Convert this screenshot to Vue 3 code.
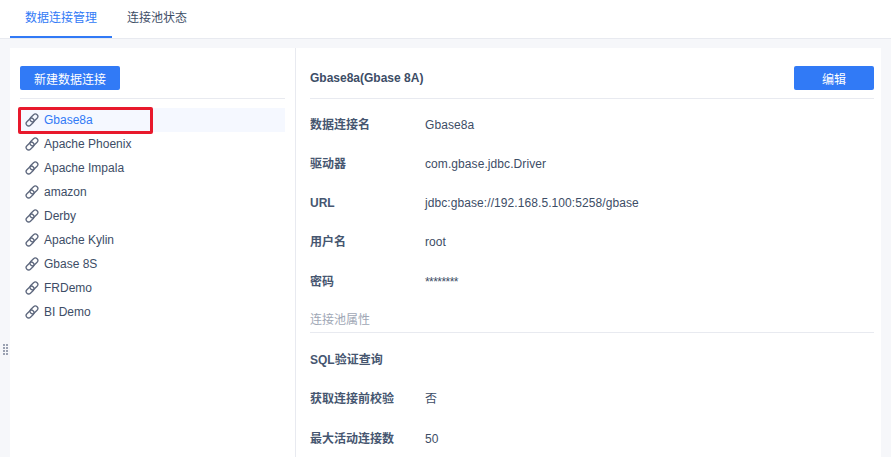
<script setup>
const items = ['Gbase8a','Apache Phoenix','Apache Impala','amazon','Derby','Apache Kylin','Gbase 8S','FRDemo','BI Demo']
const rows1 = [
  { k: '数据连接名', v: 'Gbase8a' },
  { k: '驱动器', v: 'com.gbase.jdbc.Driver' },
  { k: 'URL', v: 'jdbc:gbase://192.168.5.100:5258/gbase' },
  { k: '用户名', v: 'root' },
  { k: '密码', v: '********', mask: true },
]
const rows2 = [
  { k: 'SQL验证查询', v: '' },
  { k: '获取连接前校验', v: '否' },
  { k: '最大活动连接数', v: '50' },
]
</script>

<template>
  <div class="page">
    <div class="tabs">
      <div class="tab active">数据连接管理</div>
      <div class="tab">连接池状态</div>
    </div>
    <div class="body">
      <div class="grip"><i v-for="n in 8" :key="n"></i></div>
      <div class="panel">
        <div class="left">
          <div class="left-head"><button class="btn new">新建数据连接</button></div>
          <ul class="list">
            <li v-for="(it, i) in items" :key="it" :class="{ sel: i === 0 }">
              <svg class="ic" viewBox="0 0 14 14" width="14" height="14" fill="none" stroke="#5d677d" stroke-width="1.3">
                <rect x="4.4" y="2.4" width="9" height="5" rx="2.5" transform="rotate(-45 8.9 4.9)" />
                <rect x="0.6" y="6.6" width="9" height="5" rx="2.5" transform="rotate(-45 5.1 9.1)" />
              </svg>
              <span>{{ it }}</span>
            </li>
          </ul>
          <div class="mark"></div>
        </div>
        <div class="right">
          <div class="right-head">
            <span class="title">Gbase8a(Gbase 8A)</span>
            <button class="btn edit">编辑</button>
          </div>
          <div class="rows first">
            <div class="row" v-for="r in rows1" :key="r.k">
              <span class="k">{{ r.k }}</span><span class="v" :class="{ mask: r.mask }">{{ r.v }}</span>
            </div>
          </div>
          <div class="section">连接池属性</div>
          <div class="rows second">
            <div class="row" v-for="r in rows2" :key="r.k">
              <span class="k">{{ r.k }}</span><span class="v">{{ r.v }}</span>
            </div>
          </div>
        </div>
      </div>
    </div>
  </div>
</template>

<style>
html, body { margin: 0; background: #f6f7fa; overflow: hidden; }
</style>

<style scoped>
.page {
  width: 891px; height: 457px; overflow: hidden; background: #f6f7fa;
  font-family: "Liberation Sans", "Noto Sans CJK SC", sans-serif;
  font-size: 12px; color: #3d4d66;
}
.tabs { height: 38px; background: #fff; border-bottom: 1px solid #e8eaf0; display: flex; padding-left: 10px; }
.tab { width: 102px; height: 38px; line-height: 37px; text-align: center; box-sizing: border-box; }
.tab + .tab { width: 90px; }
.tab.active { color: #317af6; border-bottom: 2px solid #317af6; }
.body { position: relative; height: 418px; padding: 9px 10px 0; box-sizing: border-box; }
.grip { position: absolute; left: 3px; top: 305px; width: 6px; display: grid; grid-template-columns: 2px 2px; gap: 1px; }
.grip i { width: 2px; height: 2px; background: #9aa1b1; }
.panel { background: #fff; height: 409px; display: flex; }
.left { width: 286px; height: 100%; position: relative; padding: 18px 10px 0; box-sizing: border-box; border-right: 1px solid #e8eaf0; flex: none; }
.left-head { height: 32px; border-bottom: 1px solid #e8eaf0; }
.btn { border: 0; background: #317af6; color: #fff; font: inherit; height: 24px; border-radius: 2px; padding: 0; display: block; }
.new { width: 100px; }
.list { list-style: none; margin: 9px 0 0; padding: 0; }
.list li { height: 24px; display: flex; align-items: center; padding-left: 5px; color: #3d4d66; }
.list li.sel { background: #f5f8ff; color: #317af6; }
.ic { margin-right: 5px; flex: none; }
.mark { position: absolute; left: 8px; top: 59px; width: 135px; height: 27px; box-sizing: border-box; border: 3px solid #e8192c; border-radius: 2px; }
.right { flex: 1; padding: 18px 7px 0 14px; min-width: 0; }
.right-head { height: 32px; border-bottom: 1px solid #e8eaf0; display: flex; justify-content: space-between; align-items: flex-start; }
.title { font-weight: 700; line-height: 24px; }
.edit { width: 80px; }
.rows.first { margin-top: 6px; }
.row { height: 39.25px; display: flex; align-items: center; }
.k { width: 115px; font-weight: 700; line-height: 16px; color: #465670; flex: none; }
.v { line-height: 16px; color: #3d4d66; letter-spacing: .08px; }
.v.mask { letter-spacing: -.55px; }
.section { padding-top: 11.8px; height: 18.95px; line-height: 14px; color: #a0a7b5; border-bottom: 1px solid #e8eaf0; }
.rows.second { margin-top: 7.4px; }
</style>
